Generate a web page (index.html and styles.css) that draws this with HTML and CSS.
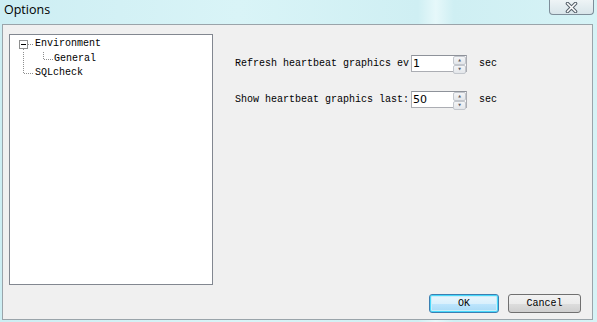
FILE: index.html
```html
<!DOCTYPE html>
<html lang="en">
<head>
  <meta charset="UTF-8">
  <title>Options</title>
  <link rel="stylesheet" href="styles.css">
</head>
<body>
  <div class="window">
    <header class="titlebar">
      <span class="title">Options</span>
      <button class="close-btn" title="Close">
        <svg width="13" height="11" viewBox="0 0 13 11">
          <path d="M2.5 1.5 L10.5 9.5 M10.5 1.5 L2.5 9.5" stroke="#56616b" stroke-width="3.6" stroke-linecap="round"/>
          <path d="M2.5 1.5 L10.5 9.5 M10.5 1.5 L2.5 9.5" stroke="#ffffff" stroke-width="1.6" stroke-linecap="round"/>
        </svg>
      </button>
    </header>

    <div class="client">
      <div class="main">
        <div class="tree">
          <div class="tree-row">
            <svg class="twig" width="25" height="14" viewBox="0 0 25 14">
              <rect x="9.5" y="3.5" width="8" height="8" fill="#fff" stroke="#8e8f8f"/>
              <path d="M11 7.5 H16" stroke="#000"/>
              <path d="M18 7.5 H24 M13.5 12 V14" stroke="#8e8f8f" stroke-dasharray="1 1"/>
            </svg>
            <span>Environment</span>
          </div>
          <div class="tree-row">
            <svg class="twig" width="44" height="14" viewBox="0 0 44 14">
              <path d="M13.5 0 V14 M33.5 0 V8 M34 7.5 H43" stroke="#8e8f8f" stroke-dasharray="1 1"/>
            </svg>
            <span>General</span>
          </div>
          <div class="tree-row">
            <svg class="twig" width="25" height="14" viewBox="0 0 25 14">
              <path d="M13.5 0 V8 M14 7.5 H24" stroke="#8e8f8f" stroke-dasharray="1 1"/>
            </svg>
            <span>SQLcheck</span>
          </div>
        </div>

        <div class="settings">
          <div class="field-row">
            <label class="field-label" for="refresh">Refresh heartbeat graphics ev</label>
            <div class="spin">
              <input id="refresh" class="spin-value" value="1">
              <div class="spin-buttons">
                <span class="spin-btn">&#9652;</span>
                <span class="spin-btn">&#9662;</span>
              </div>
            </div>
            <span class="unit">sec</span>
          </div>
          <div class="field-row">
            <label class="field-label" for="last">Show heartbeat graphics last:</label>
            <div class="spin">
              <input id="last" class="spin-value" value="50">
              <div class="spin-buttons">
                <span class="spin-btn">&#9652;</span>
                <span class="spin-btn">&#9662;</span>
              </div>
            </div>
            <span class="unit">sec</span>
          </div>
        </div>
      </div>

      <div class="buttons">
        <button class="btn btn-default">OK</button>
        <button class="btn">Cancel</button>
      </div>
    </div>
  </div>
</body>
</html>
```

FILE: styles.css
```css
* { margin: 0; padding: 0; box-sizing: border-box; }
body { background: #d3f0f4; }
.window {
  width: 597px; height: 322px;
  display: flex; flex-direction: column;
  background: linear-gradient(90deg, #cdeef3 0%, #d9f4f7 40%, #cfeff3 70%, #e6f8fa 73%, #cfeff3 76%, #d6f3f6 100%);
}
.titlebar {
  height: 24px; flex: none;
  display: flex; justify-content: space-between; align-items: flex-start;
  padding-left: 4px; padding-right: 3px;
}
.title {
  font-family: "Open Sans", "Noto Sans", sans-serif;
  font-size: 12.5px; line-height: 20px; color: #000;
}
.close-btn {
  width: 45px; height: 15px;
  display: flex; align-items: center; justify-content: center;
  background: linear-gradient(#eef4f6, #d8e5ea);
  border: 1px solid #7e8d99; border-top: none;
  border-radius: 0 0 4px 4px;
}
.client {
  flex: 1;
  margin: 0 4px 2px 2px;
  border: 1px solid #9aa4aa;
  background: #f0f0f0;
  padding: 9px 11px 0 6px;
  display: flex; flex-direction: column;
  font-family: "Liberation Mono", "DejaVu Sans Mono", monospace;
  font-size: 10px; color: #000;
}
.main { display: flex; }
.tree {
  width: 204px; height: 251px;
  background: #fff; border: 1px solid #828790;
  padding-top: 2px;
}
.tree-row { display: flex; align-items: center; height: 14.5px; line-height: 14px; }
.twig { flex: none; }
.settings {
  margin-left: 22px; padding-top: 21px;
  display: flex; flex-direction: column; gap: 19px;
}
.field-row { display: flex; align-items: center; height: 17px; }
.field-label { width: 176px; white-space: nowrap; }
.spin {
  width: 56px; height: 17px;
  display: flex;
  background: #fff;
  border: 1px solid #abadb3; border-top-color: #8e929a;
}
.spin-value {
  width: 40px; border: none; outline: none; background: transparent;
  font-family: "DejaVu Sans", "Liberation Sans", sans-serif;
  font-size: 11px; padding-left: 1px; color: #000;
}
.spin-buttons {
  margin-left: auto; width: 13px;
  display: flex; flex-direction: column;
}
.spin-btn {
  flex: 1;
  display: flex; align-items: center; justify-content: center;
  background: linear-gradient(#f4f5f7, #e3e6ea);
  border: 1px solid #c3c7cd; border-radius: 2px;
  font-size: 7px; line-height: 1; color: #5d626b;
}
.unit { margin-left: 12px; }
.buttons {
  margin-top: 9px;
  display: flex; justify-content: flex-end; gap: 9px;
}
.btn {
  height: 19px;
  font-family: "Liberation Mono", "DejaVu Sans Mono", monospace;
  font-size: 10px; color: #000;
  border: 1px solid #707070; border-radius: 3px;
  background: linear-gradient(#f2f2f2 0%, #ebebeb 50%, #dddddd 51%, #cfcfcf 100%);
  width: 73px;
}
.btn-default {
  width: 70px;
  border-color: #3c7fb1;
  box-shadow: inset 0 0 0 1px #48d8fb, inset 0 0 0 2px #c9eef8;
  background: linear-gradient(#eaf6fd 0%, #d9f0fc 50%, #bee6fd 51%, #a7d9f5 100%);
}
```
